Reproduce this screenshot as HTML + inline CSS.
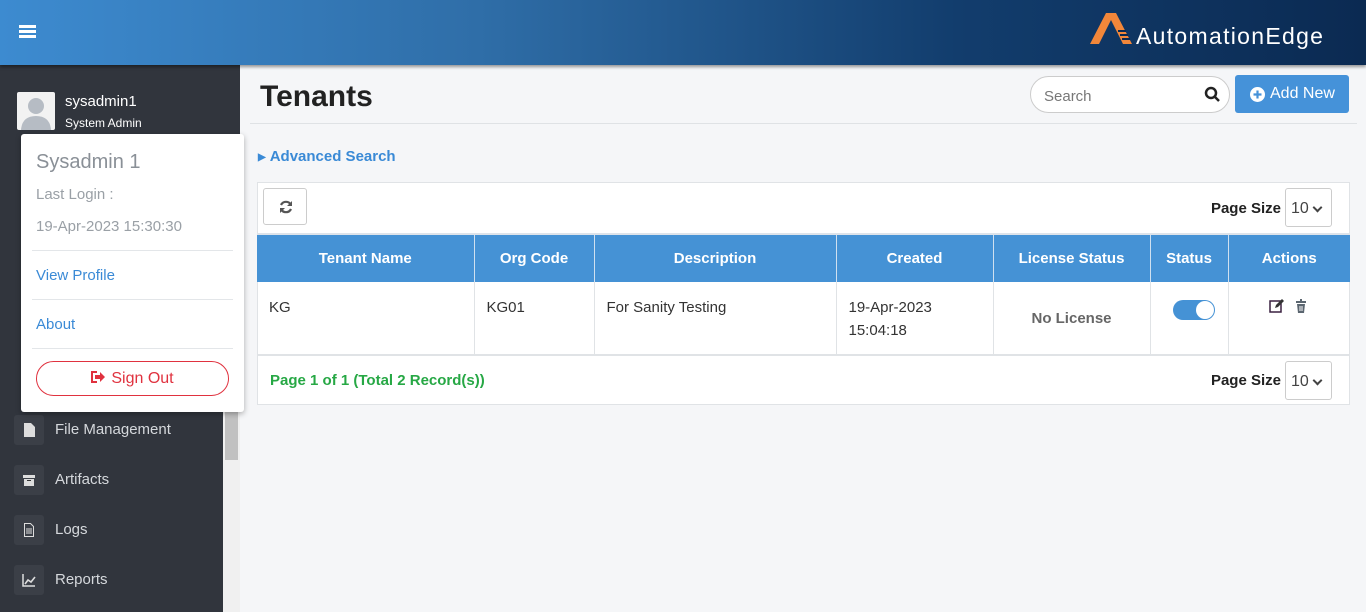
<!DOCTYPE html>
<html><head><meta charset="utf-8"><style>
*{box-sizing:border-box;margin:0;padding:0}
body{width:1366px;height:612px;overflow:hidden;font-family:"Liberation Sans",sans-serif;background:#f5f6f8;position:relative}
.hdr{position:absolute;left:0;top:0;width:1366px;height:65px;background:linear-gradient(90deg,#3d8bd0 0%,#2f6ea8 35%,#123d6d 70%,#0b2a52 100%);box-shadow:0 2px 3px rgba(0,0,0,.4);z-index:3}
.ham{position:absolute;left:19px;top:25px;width:17px}
.ham i{display:block;height:3px;background:#fff;margin-bottom:2px}
.logo{position:absolute;left:1090px;top:13px}
.logo span{position:absolute;left:46px;top:10px;color:#fff;font-size:23px;letter-spacing:1.3px;white-space:nowrap}
.side{position:absolute;left:0;top:65px;width:240px;height:547px;background:#31353d}
.sb{position:absolute;left:223px;top:400px;width:17px;height:212px;background:#f0f0f0}
.thumb{position:absolute;left:225px;top:410px;width:13px;height:50px;background:#c1c1c1}
.uname{position:absolute;left:65px;top:93px;color:#fff;font-size:15px}
.urole{position:absolute;left:65px;top:116px;color:#fff;font-size:12px}
.av{position:absolute;left:17px;top:92px;width:38px;height:38px;background:#f2f2f2;border-radius:2px;overflow:hidden}
.nav{position:absolute;left:14px;width:30px;height:30px;background:#3b3f47;border-radius:3px}
.nav svg{position:absolute;left:8px;top:8px}
.navt{position:absolute;left:55px;color:#d5d8dc;font-size:15px}
.dd{position:absolute;left:21px;top:134px;width:223px;height:278px;background:#fff;border-radius:3px;box-shadow:0 2px 6px rgba(0,0,0,.3);z-index:4}
.dd .t{position:absolute;left:15px;color:#9aa0a6}
.dd .l{position:absolute;left:15px;color:#3a8ad6;font-size:15px}
.dd hr{position:absolute;left:11px;width:201px;border:0;border-top:1px solid #e3e6e9}
.so{position:absolute;left:15px;top:227px;width:193px;height:35px;border:1px solid #e0323f;border-radius:18px;color:#e0323f;font-size:16px;text-align:center;line-height:33px}
h1{position:absolute;left:260px;top:80px;font-size:30px;font-weight:bold;color:#222}
.hline{position:absolute;left:250px;top:123px;width:1107px;border-top:1px solid #dfe2e5}
.search{position:absolute;left:1030px;top:76px;width:200px;height:37px;border:1px solid #ccc;border-radius:19px;background:#fff;color:#777;font-size:15px;padding:11px 0 0 13px}
.add{position:absolute;left:1235px;top:75px;width:114px;height:38px;background:#4592d9;border-radius:3px;color:#fff;font-size:16px;line-height:38px;padding-left:35px}
.adv{position:absolute;left:270px;top:148px;color:#3a8ad6;font-weight:bold;font-size:15px}
.box{position:absolute;left:257px;top:182px;width:1093px;height:223px;background:#fff;border:1px solid #e0e3e6}
.ref{position:absolute;left:5px;top:5px;width:44px;height:37px;border:1px solid #ccc;border-radius:3px}
.ps{position:absolute;right:68px;font-weight:bold;font-size:15px;color:#222}
.sel{position:absolute;right:17px;width:47px;height:39px;border:1px solid #ccc;border-radius:3px;font-size:16px;color:#444;padding:11px 0 0 5px}
.sel:after{content:"";position:absolute;right:10px;top:15px;width:5px;height:5px;border-right:2px solid #444;border-bottom:2px solid #444;transform:rotate(45deg)}
table{position:absolute;left:-1px;top:50px;border-collapse:collapse;width:1093px;font-size:15px}
th{background:#4592d5;color:#fff;height:48px;font-weight:bold;border-right:1px solid #cfe0f0;border-top:2px solid #dde3ea}
td{height:73px;border-right:1px solid #e0e3e6;border-bottom:2px solid #e0e3e6;vertical-align:top;padding:14px 12px 0;color:#333;line-height:23px}
.foot{position:absolute;left:12px;top:189px;color:#27a845;font-weight:bold;font-size:15px}
</style></head><body>
<div class="hdr"><div class="ham"><i></i><i></i><i></i></div>
<div class="logo"><svg width="46" height="32" viewBox="0 0 46 32"><path d="M0 31 L16 0 L26 0 L42 31 L33 31 L21 7 L9 31Z" fill="#f2873a"/><path d="M28 18h8M30 22h8M32 26h8" stroke="#0b2a52" stroke-width="2"/></svg><span>AutomationEdge</span></div></div>
<div class="side"></div>
<div class="av"><svg width="38" height="38"><circle cx="19" cy="14" r="8" fill="#b6bcc4"/><path d="M4 38 Q5 24 19 24 Q33 24 34 38Z" fill="#b6bcc4"/></svg></div>
<div class="uname">sysadmin1</div><div class="urole">System Admin</div>
<div class="nav" style="top:415px"><svg width="14" height="14"><path d="M2 0h7l4 4v10H2z" fill="#ddd"/></svg></div><div class="navt" style="top:421px">File Management</div>
<div class="nav" style="top:465px"><svg width="14" height="14"><rect x="1" y="2" width="12" height="3" fill="#ddd"/><rect x="2" y="6" width="10" height="7" fill="#ddd"/><rect x="5" y="7" width="4" height="1" fill="#333"/></svg></div><div class="navt" style="top:471px">Artifacts</div>
<div class="nav" style="top:515px"><svg width="14" height="14"><path d="M2.5 .5h6l3 3v10h-9z" stroke="#ddd" fill="none"/><path d="M4 6h6M4 8h6M4 10h6" stroke="#ddd"/></svg></div><div class="navt" style="top:521px">Logs</div>
<div class="nav" style="top:565px"><svg width="14" height="14"><path d="M1 1v12h12" stroke="#ddd" stroke-width="1.5" fill="none"/><path d="M3 11l3-4 3 2 4-5" stroke="#ddd" stroke-width="1.6" fill="none"/></svg></div><div class="navt" style="top:571px">Reports</div>
<div class="sb"></div><div class="thumb"></div>
<div class="dd">
<div class="t" style="top:17px;font-size:20px;color:#8a9097">Sysadmin 1</div>
<div class="t" style="top:52px;font-size:15px">Last Login :</div>
<div class="t" style="top:84px;font-size:15px">19-Apr-2023 15:30:30</div>
<hr style="top:116px"><div class="l" style="top:133px">View Profile</div>
<hr style="top:165px"><div class="l" style="top:182px">About</div>
<hr style="top:214px"><div class="so"><svg width="14" height="12" style="margin-right:6px"><path d="M6 1H1v10h5" stroke="#e0323f" stroke-width="2" fill="none"/><path d="M4 4h5V1l5 5-5 5V8H4z" fill="#e0323f"/></svg>Sign Out</div></div>
<h1>Tenants</h1><div class="hline"></div>
<div class="search">Search<svg style="position:absolute;right:8px;top:9px" width="17" height="17"><circle cx="7" cy="7" r="5" stroke="#222" stroke-width="2.5" fill="none"/><path d="M11 11l4 4" stroke="#222" stroke-width="2.5"/></svg></div>
<div class="add"><svg style="position:absolute;left:15px;top:12px" width="15" height="15"><circle cx="7.5" cy="7.5" r="7.5" fill="#fff"/><path d="M7.5 3.5v8M3.5 7.5h8" stroke="#4592d9" stroke-width="2.2"/></svg>Add New</div>
<div class="adv"><span style="font-size:10px;position:relative;left:-12px;top:-1px">&#9654;</span><span style="margin-left:-8px">Advanced Search</span></div>
<div class="box">
<div class="ref"><svg style="margin:10px 0 0 14px" width="16" height="16" viewBox="0 0 16 16"><path d="M13 6A5.5 5.5 0 0 0 3 6M3 10a5.5 5.5 0 0 0 10 0" stroke="#555" stroke-width="2.2" fill="none"/><path d="M14 2v5h-5zM2 14V9h5z" fill="#555"/></svg></div>
<div class="ps" style="top:17px">Page Size</div><div class="sel" style="top:5px">10</div>
<table><tr><th style="width:217px">Tenant Name</th><th style="width:120px">Org Code</th><th style="width:242px">Description</th><th style="width:157px">Created</th><th style="width:157px">License Status</th><th style="width:78px">Status</th><th style="border-right:0">Actions</th></tr>
<tr><td>KG</td><td>KG01</td><td>For Sanity Testing</td><td>19-Apr-2023<br>15:04:18</td><td style="text-align:center;padding-top:25px;font-weight:bold;color:#666">No License</td><td style="padding-top:18px"><div style="margin-left:10px;width:42px;height:20px;border-radius:10px;background:#4592d5;position:relative"><div style="position:absolute;right:1px;top:1px;width:18px;height:18px;border-radius:50%;background:#fff"></div></div></td><td style="border-right:0;text-align:center;padding-top:16px"><svg width="40" height="16"><rect x="1" y="3" width="11" height="11" stroke="#3a2040" stroke-width="1.5" fill="none"/><path d="M6 10l1-3 6-6 2 2-6 6z" fill="#333"/><path d="M27 4h10M31 2h2" stroke="#5b6670" stroke-width="2"/><path d="M28 6h8l-1 9h-6z" fill="#5b6670"/><path d="M31 8v5M33 8v5" stroke="#fff"/></svg></td></tr></table>
<div class="foot">Page 1 of 1 (Total 2 Record(s))</div>
<div class="ps" style="top:189px">Page Size</div><div class="sel" style="top:178px">10</div>
</div>
</body></html>
